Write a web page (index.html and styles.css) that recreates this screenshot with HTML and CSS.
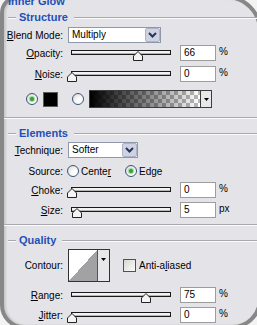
FILE: index.html
```html
<!DOCTYPE html>
<html lang="en">
<head>
  <meta charset="UTF-8" />
  <title>Inner Glow</title>
  <link rel="stylesheet" href="styles.css">
</head>
<body>
  <div class="dialog">
    <div class="title">Inner Glow</div>

    <div class="group group-structure">
      <div class="group-head"><span>Structure</span></div>

      <div class="row row-blend">
        <span class="label"><u>B</u>lend Mode:</span>
        <div class="select select-blend">
          <span class="select-text">Multiply</span>
          <span class="select-btn">
            <svg width="9" height="6" viewBox="0 0 9 6"><polyline points="1,1 4.5,4.5 8,1" fill="none" stroke="#27355a" stroke-width="2"/></svg>
          </span>
        </div>
      </div>

      <div class="row row-opacity">
        <span class="label"><u>O</u>pacity:</span>
        <div class="slider">
          <div class="track"></div>
          <svg class="thumb" style="left: 62px" width="10" height="10" viewBox="0 0 10 10"><polygon points="5,0.5 9.5,5 9.5,9.5 0.5,9.5 0.5,5" fill="#f4f4f4" stroke="#222"/></svg>
        </div>
        <div class="field">66</div>
        <span class="unit">%</span>
      </div>

      <div class="row row-noise">
        <span class="label"><u>N</u>oise:</span>
        <div class="slider">
          <div class="track"></div>
          <svg class="thumb" style="left: -4px" width="10" height="10" viewBox="0 0 10 10"><polygon points="5,0.5 9.5,5 9.5,9.5 0.5,9.5 0.5,5" fill="#f4f4f4" stroke="#222"/></svg>
        </div>
        <div class="field">0</div>
        <span class="unit">%</span>
      </div>

      <div class="row row-color">
        <span class="radio checked"></span>
        <span class="swatch"></span>
        <span class="radio radio-gradient"></span>
        <div class="gradient">
          <span class="gradient-fill"></span>
          <span class="gradient-arrow">
            <svg width="5" height="3" viewBox="0 0 5 3"><polygon points="0,0 5,0 2.5,3" fill="#000"/></svg>
          </span>
        </div>
      </div>
    </div>

    <div class="group group-elements">
      <div class="group-head"><span>Elements</span></div>

      <div class="row row-technique">
        <span class="label"><u>T</u>echnique:</span>
        <div class="select select-technique">
          <span class="select-text">Softer</span>
          <span class="select-btn">
            <svg width="9" height="6" viewBox="0 0 9 6"><polyline points="1,1 4.5,4.5 8,1" fill="none" stroke="#27355a" stroke-width="2"/></svg>
          </span>
        </div>
      </div>

      <div class="row row-source">
        <span class="label">Source:</span>
        <span class="radio radio-center"></span>
        <span class="option">Cente<u>r</u></span>
        <span class="radio checked radio-edge"></span>
        <span class="option">Ed<u>g</u>e</span>
      </div>

      <div class="row row-choke">
        <span class="label"><u>C</u>hoke:</span>
        <div class="slider">
          <div class="track"></div>
          <svg class="thumb" style="left: -4px" width="10" height="10" viewBox="0 0 10 10"><polygon points="5,0.5 9.5,5 9.5,9.5 0.5,9.5 0.5,5" fill="#f4f4f4" stroke="#222"/></svg>
        </div>
        <div class="field">0</div>
        <span class="unit">%</span>
      </div>

      <div class="row row-size">
        <span class="label"><u>S</u>ize:</span>
        <div class="slider">
          <div class="track"></div>
          <svg class="thumb" style="left: 1px" width="10" height="10" viewBox="0 0 10 10"><polygon points="5,0.5 9.5,5 9.5,9.5 0.5,9.5 0.5,5" fill="#f4f4f4" stroke="#222"/></svg>
        </div>
        <div class="field">5</div>
        <span class="unit">px</span>
      </div>
    </div>

    <div class="group group-quality">
      <div class="group-head"><span>Quality</span></div>

      <div class="row row-contour">
        <span class="label">Contour:</span>
        <div class="contour">
          <span class="contour-fill"></span>
          <span class="contour-arrow">
            <svg width="5" height="3" viewBox="0 0 5 3"><polygon points="0,0 5,0 2.5,3" fill="#000"/></svg>
          </span>
        </div>
        <span class="checkbox"></span>
        <span class="option">Anti-a<u>l</u>iased</span>
      </div>

      <div class="row row-range">
        <span class="label"><u>R</u>ange:</span>
        <div class="slider">
          <div class="track"></div>
          <svg class="thumb" style="left: 70px" width="10" height="10" viewBox="0 0 10 10"><polygon points="5,0.5 9.5,5 9.5,9.5 0.5,9.5 0.5,5" fill="#f4f4f4" stroke="#222"/></svg>
        </div>
        <div class="field">75</div>
        <span class="unit">%</span>
      </div>

      <div class="row row-jitter">
        <span class="label"><u>J</u>itter:</span>
        <div class="slider">
          <div class="track"></div>
          <svg class="thumb" style="left: -4px" width="10" height="10" viewBox="0 0 10 10"><polygon points="5,0.5 9.5,5 9.5,9.5 0.5,9.5 0.5,5" fill="#f4f4f4" stroke="#222"/></svg>
        </div>
        <div class="field">0</div>
        <span class="unit">%</span>
      </div>
    </div>
  </div>
</body>
</html>
```

FILE: styles.css
```css
body {
  margin: 0;
  width: 257px;
  height: 325px;
  overflow: hidden;
  background: #f3f3f3;
  font-family: "Liberation Sans", Arial, sans-serif;
  font-size: 10px;
  color: #000;
}

u {
  text-underline-offset: 1px;
}

.dialog {
  box-sizing: border-box;
  width: 262px;
  height: 334px;
  margin-top: -5px;
  background: #e4e4e8;
  border: 4px solid #878787;
  border-radius: 18px 36px 30px 24px;
  box-shadow: inset 2px 0 2px rgba(0, 0, 0, 0.12);
}

.title {
  margin: -4px 0 0 4px;
  height: 12px;
  line-height: 12px;
  font-size: 11px;
  font-weight: bold;
  color: #1f4fb8;
}

/* group boxes */
.group {
  border-bottom: 1px solid #a8a8ad;
  box-shadow: 0 1px 0 #fafafa;
}

.group-structure {
  padding-bottom: 9px;
}

.group-elements {
  padding-bottom: 6px;
}

.group-quality {
  border-bottom: none;
  box-shadow: none;
}

.group-head {
  display: flex;
  align-items: center;
  height: 12px;
  margin-top: 4px;
  font-size: 11px;
  font-weight: bold;
  color: #1f4fb8;
}

.group + .group .group-head {
  margin-top: 9px;
}

.group-head::before,
.group-head::after {
  content: "";
  height: 1px;
  background: #a8a8ad;
  box-shadow: 0 1px 0 #fafafa;
}

.group-head::before {
  width: 8px;
  margin-left: 4px;
}

.group-head::after {
  flex: 1;
}

.group-head span {
  padding: 0 6px 0 3px;
}

/* rows */
.row {
  display: flex;
  align-items: center;
  height: 16px;
}

.row-blend { margin-top: 4px; }
.row-opacity { margin-top: 2px; }
.row-noise { margin-top: 5px; }
.row-color { margin-top: 8px; height: 18px; padding-left: 22px; }
.row-technique { margin-top: 3px; }
.row-source { margin-top: 6px; height: 14px; }
.row-choke { margin-top: 4px; }
.row-size { margin-top: 4px; }
.row-contour { margin-top: 3px; height: 33px; }
.row-range { margin-top: 5px; }
.row-jitter { margin-top: 4px; }

.label {
  flex: none;
  width: 59px;
  text-align: right;
  white-space: nowrap;
}

/* dropdowns */
.select {
  box-sizing: border-box;
  display: flex;
  height: 16px;
  margin-left: 5px;
  background: #fff;
  border: 1px solid #8e98a8;
}

.select-blend { width: 93px; }
.select-technique { width: 70px; }

.select-text {
  flex: 1;
  padding-left: 3px;
  line-height: 14px;
}

.select-btn {
  box-sizing: border-box;
  display: flex;
  align-items: center;
  justify-content: center;
  width: 15px;
  background: #cfd2e2;
  border: 1px solid #aeb3c8;
  border-radius: 2px;
}

/* sliders */
.slider {
  position: relative;
  flex: none;
  width: 100px;
  height: 16px;
  margin-left: 8px;
}

.track {
  box-sizing: border-box;
  height: 5px;
  margin-top: 5px;
  background: #f2f2f2;
  border: 1px solid #1a1a1a;
  box-shadow: inset 0 -1px 0 #b5b5b5;
}

.thumb {
  position: absolute;
  top: 6px;
}

.field {
  box-sizing: border-box;
  width: 36px;
  height: 16px;
  margin-left: 9px;
  padding-left: 3px;
  line-height: 14px;
  background: #fff;
  border: 1px solid #9d9d9d;
}

.unit {
  align-self: flex-start;
  margin: 1px 0 0 3px;
  line-height: 11px;
}

/* radios and checkbox */
.radio {
  box-sizing: border-box;
  display: flex;
  align-items: center;
  justify-content: center;
  flex: none;
  width: 12px;
  height: 12px;
  border: 1px solid #3a5575;
  border-radius: 50%;
  background: radial-gradient(circle at 70% 70%, #fff 25%, #d4d4d8 100%);
}

.radio.checked::after {
  content: "";
  width: 4px;
  height: 4px;
  border-radius: 50%;
  background: #2fa52f;
  box-shadow: 0 0 1px 1px #93d293;
}

.radio-gradient { margin-left: 14px; }
.radio-center { margin-left: 4px; }
.radio-edge { margin-left: 14px; }

.option {
  margin-left: 2px;
  white-space: nowrap;
}

.checkbox {
  box-sizing: border-box;
  flex: none;
  width: 13px;
  height: 13px;
  margin-left: 13px;
  border: 1px solid #3a5575;
  background: linear-gradient(135deg, #d8d8d2, #fafafa);
}

.checkbox + .option {
  margin-left: 3px;
}

/* colour pickers */
.swatch {
  box-sizing: border-box;
  width: 15px;
  height: 15px;
  margin-left: 5px;
  background: #000;
  border: 1px solid #5a5a5a;
}

.gradient {
  box-sizing: border-box;
  display: flex;
  width: 123px;
  height: 18px;
  margin-left: 5px;
  border: 1px solid #3c3c3c;
}

.gradient-fill {
  flex: 1;
  border-right: 1px solid #3c3c3c;
  background:
    linear-gradient(to right, #000, rgba(0, 0, 0, 0)),
    repeating-conic-gradient(#b9b9b9 0 25%, #fff 0 50%) 0 0 / 8px 8px;
}

.gradient-arrow {
  display: flex;
  align-items: center;
  justify-content: center;
  width: 10px;
  background: #e8e8ea;
}

.contour {
  box-sizing: border-box;
  display: flex;
  width: 42px;
  height: 33px;
  margin-left: 5px;
  border: 1px solid #333;
}

.contour-fill {
  flex: 1;
  border-right: 1px solid #555;
  background: linear-gradient(to top left, #a2a2a4 50%, #fff 50%);
}

.contour-arrow {
  display: flex;
  justify-content: center;
  width: 11px;
  padding-top: 8px;
  background: #e8e8ea;
}
```
